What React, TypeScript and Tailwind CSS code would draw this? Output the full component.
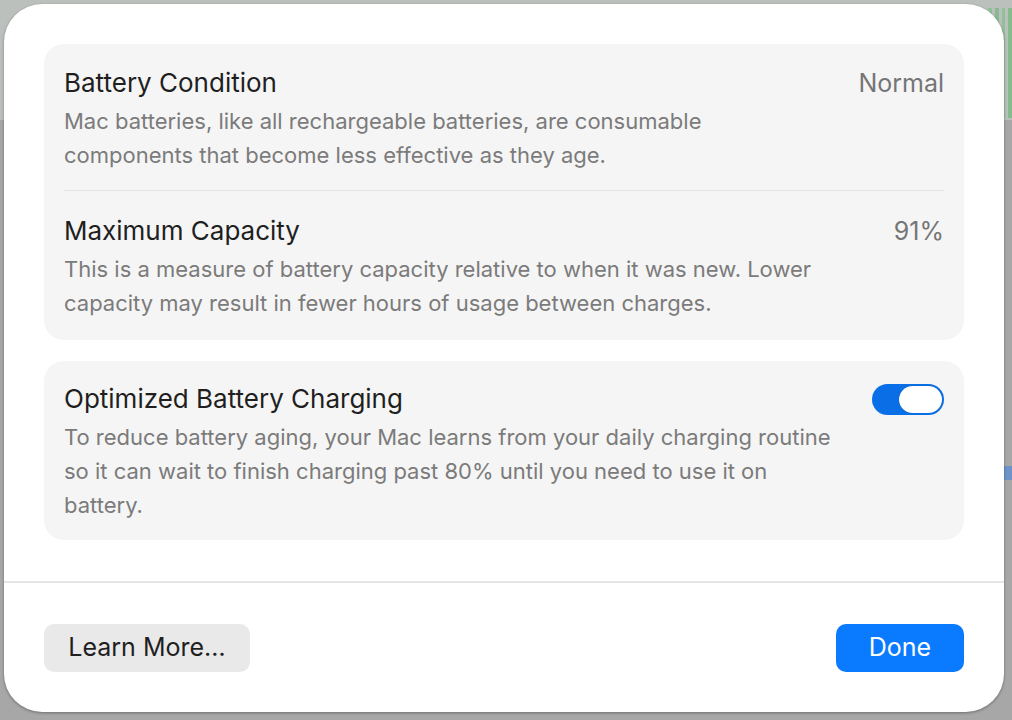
import React from "react";

function Toggle() {
  return (
    <div className="w-[72px] h-[31px] rounded-full bg-[#0a6fe6] p-[2px] flex justify-end items-center">
      <div className="w-[43px] h-[27px] rounded-full bg-white shadow-[0_0_1px_rgba(0,0,0,0.3)]" />
    </div>
  );
}

function Section({
  title,
  value,
  desc,
  right,
}: {
  title: string;
  value?: string;
  desc: React.ReactNode;
  right?: React.ReactNode;
}) {
  return (
    <div className="flex flex-col">
      <div className="flex items-center justify-between h-[32px]">
        <span className="text-[26px] leading-[32px] text-[#1f1f1f]">{title}</span>
        {value && <span className="text-[25px] leading-[32px] text-[#757575]">{value}</span>}
        {right}
      </div>
      <p className="mt-[5px] text-[22px] leading-[34px] text-[#7b7b7b] max-w-[800px]">{desc}</p>
    </div>
  );
}

export default function App() {
  return (
    <div
      className="relative w-[1012px] h-[720px] overflow-hidden bg-[#a7a7a7]"
      style={{ fontFamily: "Inter, 'Noto Sans', 'Liberation Sans', sans-serif" }}
    >
      {/* background window pieces */}
      <div className="absolute left-0 top-0 w-[1012px] h-[120px] bg-[#bcc0bc]" />
      <div className="absolute right-0 top-[8px] w-[24px] h-[110px] flex gap-[3px] justify-end">
        <div className="w-[4px] h-full bg-[#8fc196]" />
        <div className="w-[4px] h-full bg-[#86bb8e]" />
        <div className="w-[4px] h-full bg-[#8fc196]" />
        <div className="w-[4px] h-full bg-[#86bb8e]" />
      </div>
      <div className="absolute right-0 top-[466px] w-[10px] h-[14px] bg-[#6f92c9]" />

      {/* dialog */}
      <div className="absolute left-[4px] top-[4px] w-[1000px] h-[708px] rounded-[38px] bg-white shadow-[0_1px_3px_rgba(0,0,0,0.35)] flex flex-col overflow-hidden">
        <div className="flex flex-col gap-[21px] px-[40px] pt-[40px] pb-[41px]">
          <div className="rounded-[20px] bg-[#f5f5f5] px-[20px] pt-[23px] pb-[20px] flex flex-col">
            <Section
              title="Battery Condition"
              value="Normal"
              desc={
                <>
                  Mac batteries, like all rechargeable batteries, are consumable
                  <br />
                  components that become less effective as they age.
                </>
              }
            />
            <div className="h-px bg-[#e3e3e3] mt-[18px] mb-[24px]" />
            <Section
              title="Maximum Capacity"
              value="91%"
              desc={
                <>
                  This is a measure of battery capacity relative to when it was new. Lower
                  <br />
                  capacity may result in fewer hours of usage between charges.
                </>
              }
            />
          </div>
          <div className="rounded-[20px] bg-[#f5f5f5] px-[20px] pt-[22px] pb-[18px]">
            <Section
              title="Optimized Battery Charging"
              right={<Toggle />}
              desc={
                <>
                  To reduce battery aging, your Mac learns from your daily charging routine
                  <br />
                  so it can wait to finish charging past 80% until you need to use it on
                  <br />
                  battery.
                </>
              }
            />
          </div>
        </div>
        <div className="h-[2px] bg-[#e5e5e5]" />
        <div className="flex-1 flex items-center justify-between px-[40px]">
          <button className="w-[206px] h-[48px] rounded-[10px] bg-[#e9e9e9] text-[25px] text-[#1f1f1f]">
            Learn More…
          </button>
          <button className="w-[128px] h-[48px] rounded-[10px] bg-[#0a7aff] text-[25px] text-white">
            Done
          </button>
        </div>
      </div>
    </div>
  );
}
